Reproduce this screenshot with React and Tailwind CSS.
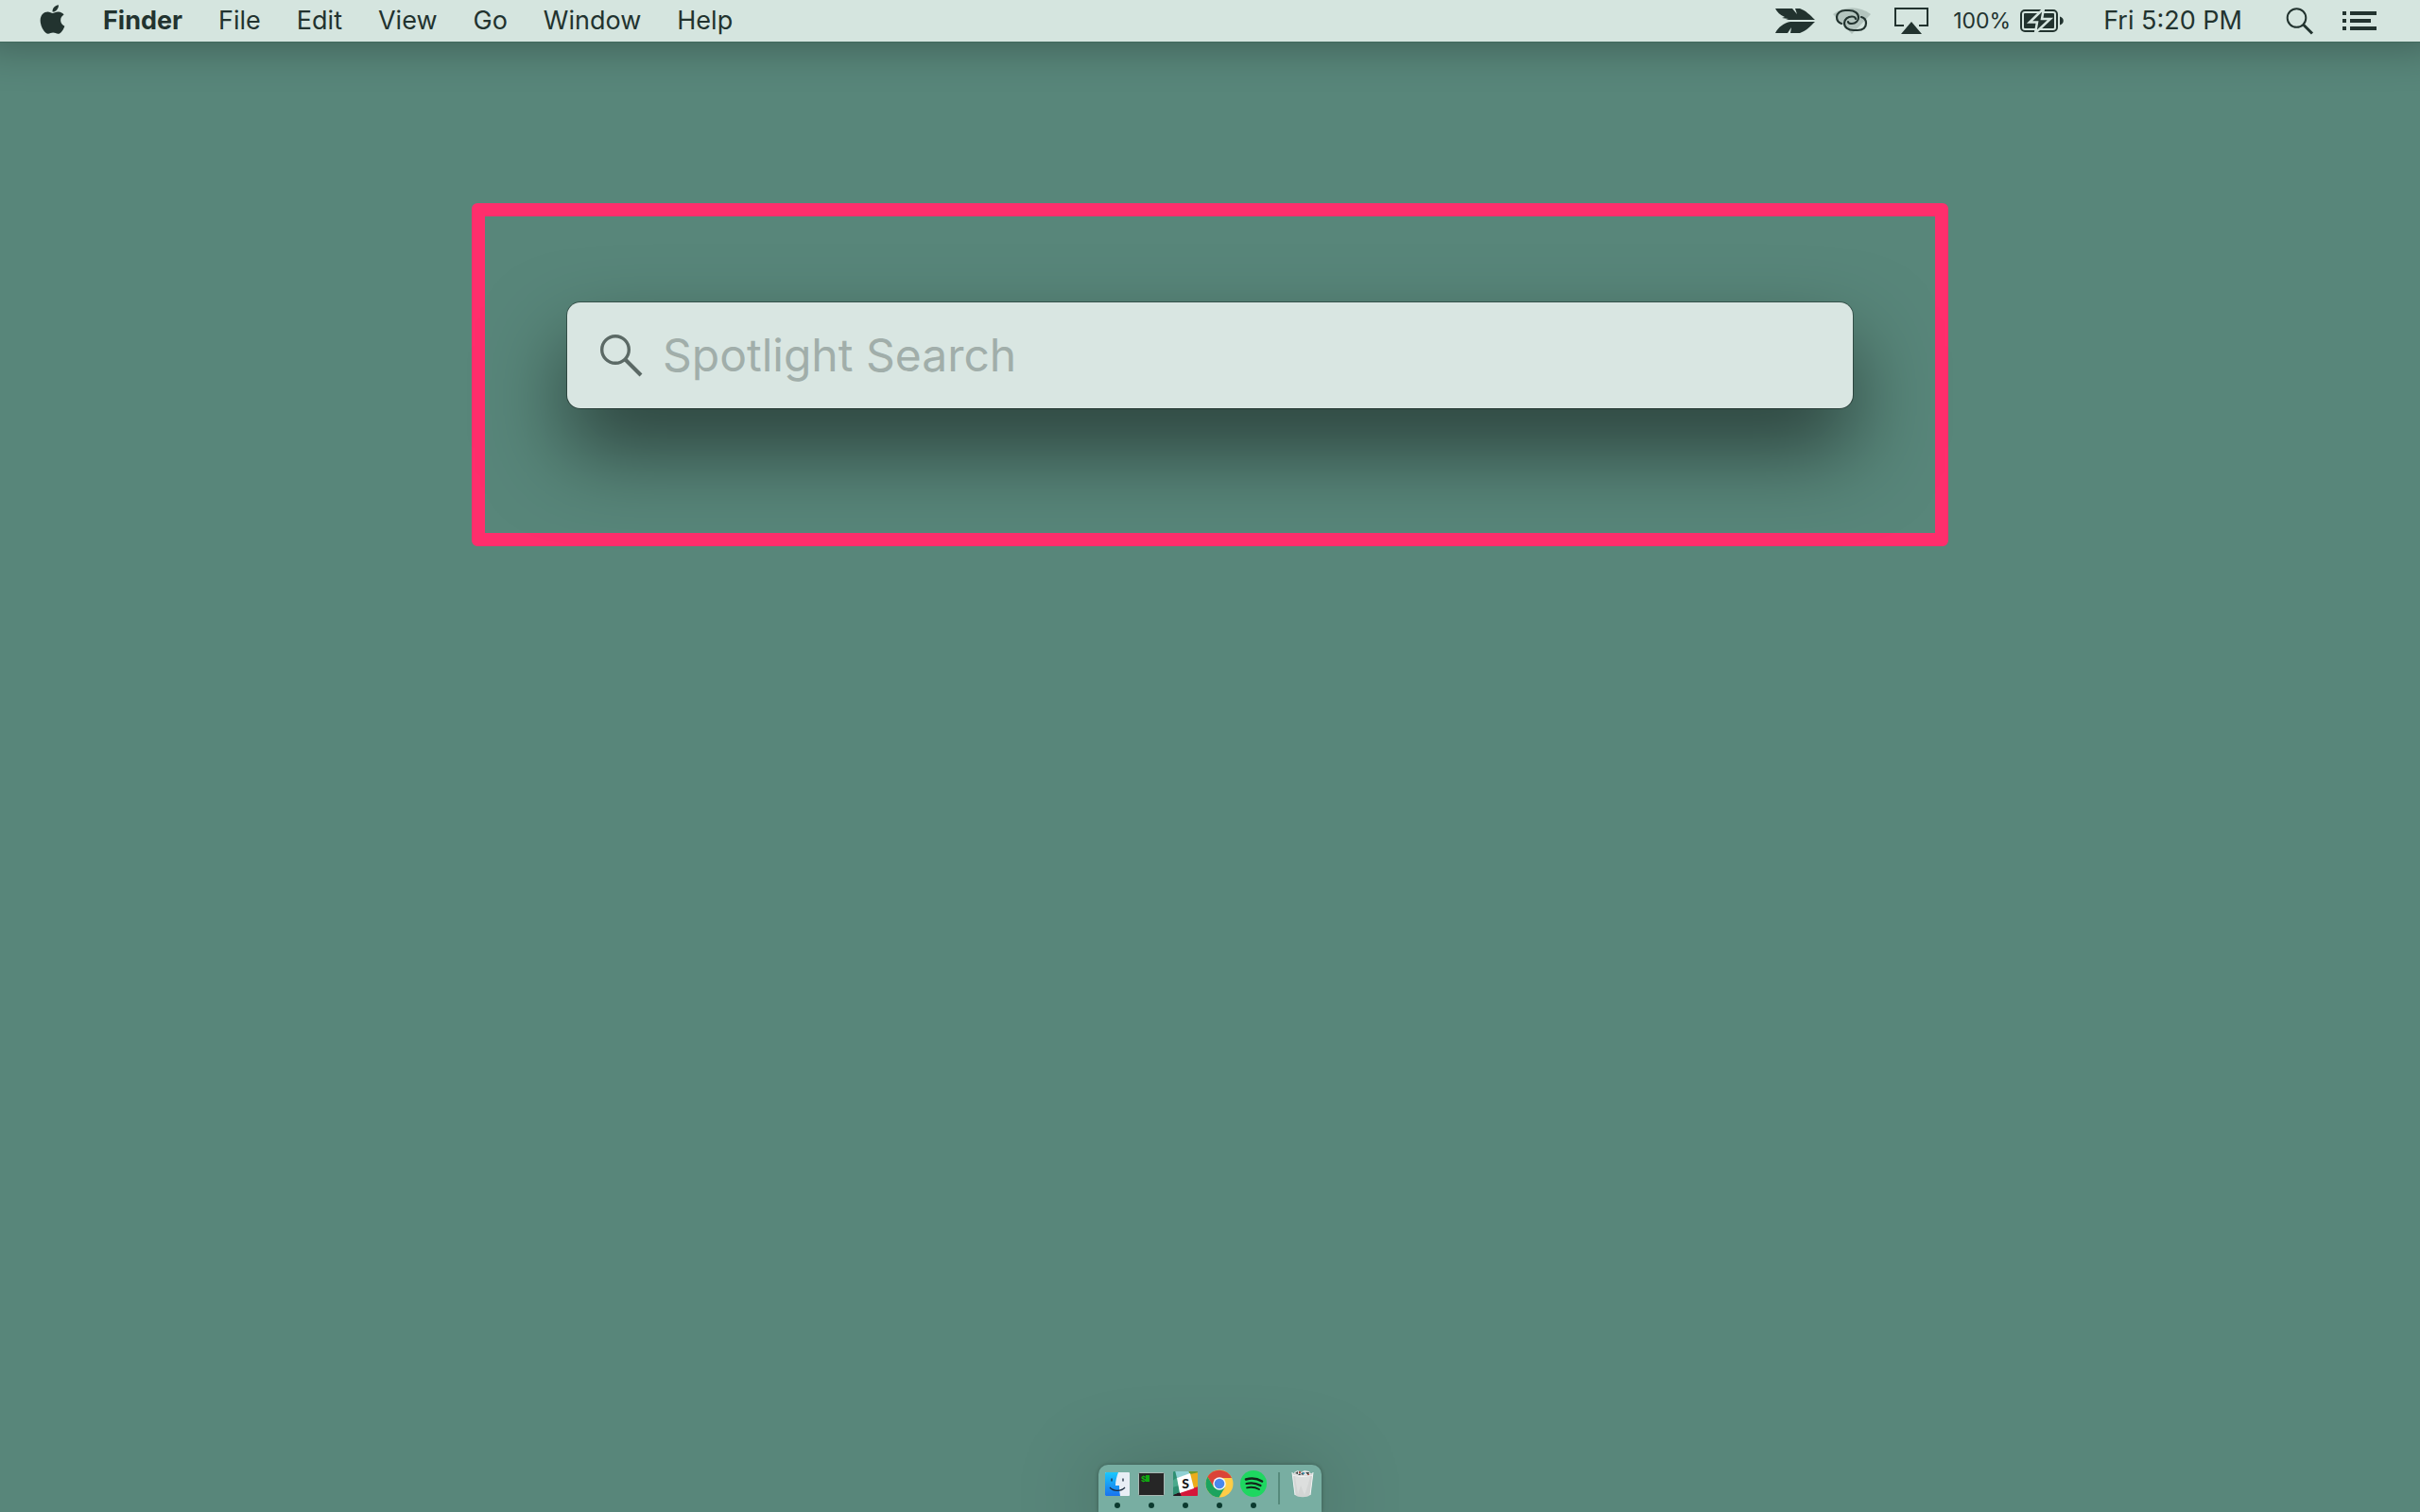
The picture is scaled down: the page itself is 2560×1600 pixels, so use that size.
import React from "react";
import { FaApple } from "react-icons/fa";

const menus = ["File", "Edit", "View", "Go", "Window", "Help"];

function ArrowIcon() {
  return (
    <svg width="42" height="28" viewBox="0 0 42 28" fill="#22332f" aria-hidden="true">
      <path d="M0 1H18L23 7L21 1H26C32 3 37 8 42 13H11L14 12L7 11L10 10C5 8 2 5 0 1Z" />
      <path d="M0 27H13L17 21L16 27H26C32 25 37 20 42 15H16C9 16 3 21 0 27Z" />
    </svg>
  );
}

function CloudIcon() {
  return (
    <svg width="42" height="30" viewBox="0 0 42 30" fill="none" aria-hidden="true">
      <path d="M1 8C13 -1 29 -1 41 8L21 29Z" fill="#b3c4be" />
      <g stroke="#22332f" strokeWidth="2.200" strokeLinecap="round">
        <path d="M10 18C7 17 5 14 5 11C5 7 9 4 14 4H18C24 4 28 7 28 11.500C28 15 25 18 21 18C19 18 17 17.500 17 16" />
        <path d="M31 11C35 12 36 15 36 17.500C36 22 33 25 27 25H23C17 25 13 22 13 17.500C13 13 17 10.500 21 10.500C23 10.500 25 11.500 25 13" />
      </g>
    </svg>
  );
}

function AirPlayIcon() {
  return (
    <svg width="36" height="28" viewBox="0 0 36 28" aria-hidden="true">
      <path d="M10 19H1V1H35V19H26" fill="none" stroke="#22332f" strokeWidth="2" />
      <path d="M18 15L29 28H7Z" fill="#22332f" />
    </svg>
  );
}

function BatteryIcon() {
  return (
    <svg width="46" height="26" viewBox="0 0 46 26" aria-hidden="true">
      <rect x="1" y="2" width="38" height="22" rx="4" fill="none" stroke="#22332f" strokeWidth="2" />
      <rect x="4" y="5" width="32" height="16" rx="1" fill="#22332f" />
      <path d="M42 8.500C47 10 47 16 42 17.500Z" fill="#22332f" />
      <path d="M25 0L10 14.500H18L16 26L32 11H23Z" fill="#22332f" stroke="#d5e5df" strokeWidth="2.500" strokeLinejoin="miter" />
    </svg>
  );
}

function FinderIcon() {
  return (
    <svg width="28" height="28" viewBox="0 0 28 28" aria-hidden="true">
      <defs>
        <linearGradient id="finderBlue" x1="0" y1="0" x2="0" y2="1">
          <stop offset="0" stopColor="#19c8fd" />
          <stop offset="1" stopColor="#1a73ee" />
        </linearGradient>
      </defs>
      <rect x="1" y="2" width="26" height="25" rx="1" fill="#e9eef5" />
      <path d="M2 2H15C13 7 12 12 12 16H16C16 20 16.500 24 17 27H2Q1 27 1 26V3Q1 2 2 2Z" fill="url(#finderBlue)" />
      <path d="M8 8.500V11.500M20 8.500V11.500" stroke="#1b2a3c" strokeWidth="1.300" />
      <path d="M6 18C10 22.500 18 22.500 22 18" fill="none" stroke="#1b2a3c" strokeWidth="1.300" />
    </svg>
  );
}

function TerminalIcon() {
  return (
    <svg width="28" height="28" viewBox="0 0 28 28" aria-hidden="true">
      <rect x="0.500" y="2.500" width="27" height="24" rx="1" fill="#262626" stroke="#a9b9b4" />
      <text x="3" y="12" fontFamily="Liberation Mono, monospace" fontWeight="700" fontSize="9" fill="#0fb80f">$</text>
      <rect x="8" y="5" width="4" height="7" fill="#0fa80f" />
    </svg>
  );
}

function SlackIcon() {
  return (
    <svg width="28" height="28" viewBox="0 0 28 28" aria-hidden="true">
      <defs>
        <clipPath id="slackTile">
          <rect x="1" y="1" width="26" height="26" rx="1" />
        </clipPath>
      </defs>
      <g clipPath="url(#slackTile)">
        <rect width="28" height="28" fill="#4aa98c" />
        <path d="M0 0H18L19 4L5 8L1 10Z" fill="#8fd0d3" />
        <path d="M0 0H3L5 8L0 11Z" fill="#2f8f72" />
        <path d="M17 0H28V2L19 5Z" fill="#6f9a2c" />
        <path d="M19 4L28 2V19L23 20Z" fill="#ecac1c" />
        <path d="M8 23L28 17V28H9Z" fill="#d5163a" />
        <path d="M0 26L8 23L10 28H0Z" fill="#26141e" />
        <path d="M0 18L7 16L8 23L0 26Z" fill="#2f8f72" />
        <path d="M5 8L19 3L23 19L8 24Z" fill="#fff" />
      </g>
      <text x="14" y="19" textAnchor="middle" fontFamily="Lato, sans-serif" fontWeight="900" fontSize="14" fill="#151515">S</text>
    </svg>
  );
}

function ChromeIcon() {
  return (
    <svg width="30" height="30" viewBox="0 0 30 30" aria-hidden="true">
      <circle cx="15" cy="15" r="14.500" fill="#ffcd46" />
      <path d="M2.400 7.800A14.500 14.500 0 0 1 28 9H15L8.500 18Z" fill="#db4437" />
      <path d="M2.400 7.800A14.500 14.500 0 0 0 14.500 29.500L21 18.500L15 21L9 18.500Z" fill="#1ba35e" />
      <circle cx="15" cy="15" r="6.800" fill="#f4f6f8" />
      <circle cx="15" cy="15" r="5.300" fill="#4a88ee" />
    </svg>
  );
}

function SpotifyIcon() {
  return (
    <svg width="28" height="28" viewBox="0 0 28 28" aria-hidden="true">
      <circle cx="14" cy="14" r="14" fill="#1ed760" />
      <g fill="none" stroke="#12241a" strokeLinecap="round">
        <path d="M6 9.500C11 8 18 8.500 23 11.500" strokeWidth="2.600" />
        <path d="M6.500 14C11 12.800 17 13.400 21.500 16" strokeWidth="2.200" />
        <path d="M7 18.300C11 17.300 16 17.800 20 20" strokeWidth="1.800" />
      </g>
    </svg>
  );
}

function TrashIcon() {
  return (
    <svg width="24" height="30" viewBox="0 0 24 30" aria-hidden="true">
      <path d="M1 4L4 27C7 30 17 30 20 27L23 4Z" fill="#d3d5d4" />
      <path d="M4 8L7 26L10 17L14 27L18 15L20 8Z" fill="#dddfde" />
      <path d="M1 3L4 27M23 3L20 27M1.500 6C7 8 17 8 22.500 6" fill="none" stroke="#f3f4f4" />
      <path d="M3 3L7 1L10 3L14 1L19 2L21 5L14 7L8 7L4 6Z" fill="#e2e2e2" />
      <path d="M4 4L7 2L7 5ZM10 5L12 3L13 6ZM15 3L19 3L18 6ZM7 6L9 4L10 6Z" fill="#3b4544" />
      <path d="M8 2H10V4H8ZM17 5H19V6H17Z" fill="#b2554b" />
      <path d="M12 3H14V5H12Z" fill="#4392b4" />
    </svg>
  );
}

const apps = [
  { name: "Finder", Icon: FinderIcon },
  { name: "Terminal", Icon: TerminalIcon },
  { name: "Slack", Icon: SlackIcon },
  { name: "Chrome", Icon: ChromeIcon },
  { name: "Spotify", Icon: SpotifyIcon },
];

function MenuBar() {
  return (
    <header className="flex h-[45px] items-center justify-between border-b border-[#426a5e] bg-[#d5e5df] pr-[46px] pl-[38px] text-[27px] leading-8 text-[#22332f] shadow-[0_-14px_44px_20px_rgba(0,0,0,0.28)]">
      <nav aria-label="Menu bar" className="flex items-center gap-[38px]">
        <button aria-label="Apple menu" className="-mt-1 -mr-0.5">
          <FaApple className="size-[35px]" />
        </button>
        <button className="font-bold">Finder</button>
        {menus.map((m) => (
          <button key={m}>{m}</button>
        ))}
      </nav>
      <div className="flex items-center">
        <button aria-label="Arrow" className="mr-[18px]"><ArrowIcon /></button>
        <button aria-label="Creative Cloud" className="mr-6"><CloudIcon /></button>
        <button aria-label="AirPlay" className="mr-[26px]"><AirPlayIcon /></button>
        <button className="mr-[42px] flex items-center gap-2.5 text-[23px]">
          100%
          <BatteryIcon />
        </button>
        <button className="mr-[46px]">Fri 5:20 PM</button>
        <button aria-label="Search" className="mr-[30px]">
          <svg width="30" height="30" viewBox="0 0 30 30" fill="none" stroke="#22332f" aria-hidden="true">
            <circle cx="11.500" cy="12" r="9.800" strokeWidth="2" />
            <path d="M18.500 19L28 28.500" strokeWidth="3" />
          </svg>
        </button>
        <button aria-label="Notification Center">
          <svg width="36" height="20" viewBox="0 0 36 20" fill="#22332f" aria-hidden="true">
            <path d="M0 0H4V4H0ZM8 0H36V4H8ZM0 8H4V12H0ZM8 8H30V12H8ZM0 16H4V20H0ZM8 16H36V20H8Z" />
          </svg>
        </button>
      </div>
    </header>
  );
}

function Spotlight() {
  return (
    <label className="flex h-28 items-center gap-[21px] rounded-[14px] bg-[#d9e6e2] pl-[34px] shadow-[0_0_0_1px_rgba(0,0,0,0.35),0_44px_88px_rgba(0,0,0,0.52)]">
      <svg className="shrink-0" width="46" height="46" viewBox="0 0 46 46" fill="none" stroke="#5b6965" aria-hidden="true">
        <circle cx="17" cy="17" r="14.300" strokeWidth="3.400" />
        <path d="M27 27L44 44" strokeWidth="4" />
      </svg>
      <input
        type="text"
        aria-label="Spotlight Search"
        placeholder="Spotlight Search"
        className="min-w-0 flex-1 bg-transparent text-[48px] leading-[64px] font-normal text-[#22332f] outline-none placeholder:text-[#a1aeaa]"
      />
    </label>
  );
}

function Dock() {
  return (
    <footer className="mx-auto flex h-[50px] items-start rounded-t-[10px] bg-[#78aea2] pr-2 pl-0.5 shadow-[0_0_4px_rgba(0,0,0,0.3),0_10px_90px_rgba(0,0,0,0.26)]">
      {apps.map(({ name, Icon }) => (
        <button key={name} aria-label={name} className="flex w-9 flex-col items-center gap-[5px] pt-[5px]">
          <span className="flex h-[30px] items-center"><Icon /></span>
          <span className="size-1.5 rounded-full bg-[#0b3a2f]" />
        </button>
      ))}
      <span className="mt-2 ml-2 h-[34px] w-0.5 bg-[#568a7c]" />
      <button aria-label="Trash" className="mt-[5px] ml-3"><TrashIcon /></button>
    </footer>
  );
}

export default function App() {
  return (
    <div className="flex min-h-screen flex-col overflow-hidden bg-[#58867a] font-['Inter',sans-serif]">
      <MenuBar />
      <main className="flex flex-1 flex-col px-4 pt-[170px]">
        <section aria-label="Spotlight" className="mx-auto w-full max-w-[1562px] rounded-md border-[14px] border-[#ff2e6c] px-[87px] pt-[91px] pb-[132px]">
          <Spotlight />
        </section>
      </main>
      <Dock />
    </div>
  );
}
